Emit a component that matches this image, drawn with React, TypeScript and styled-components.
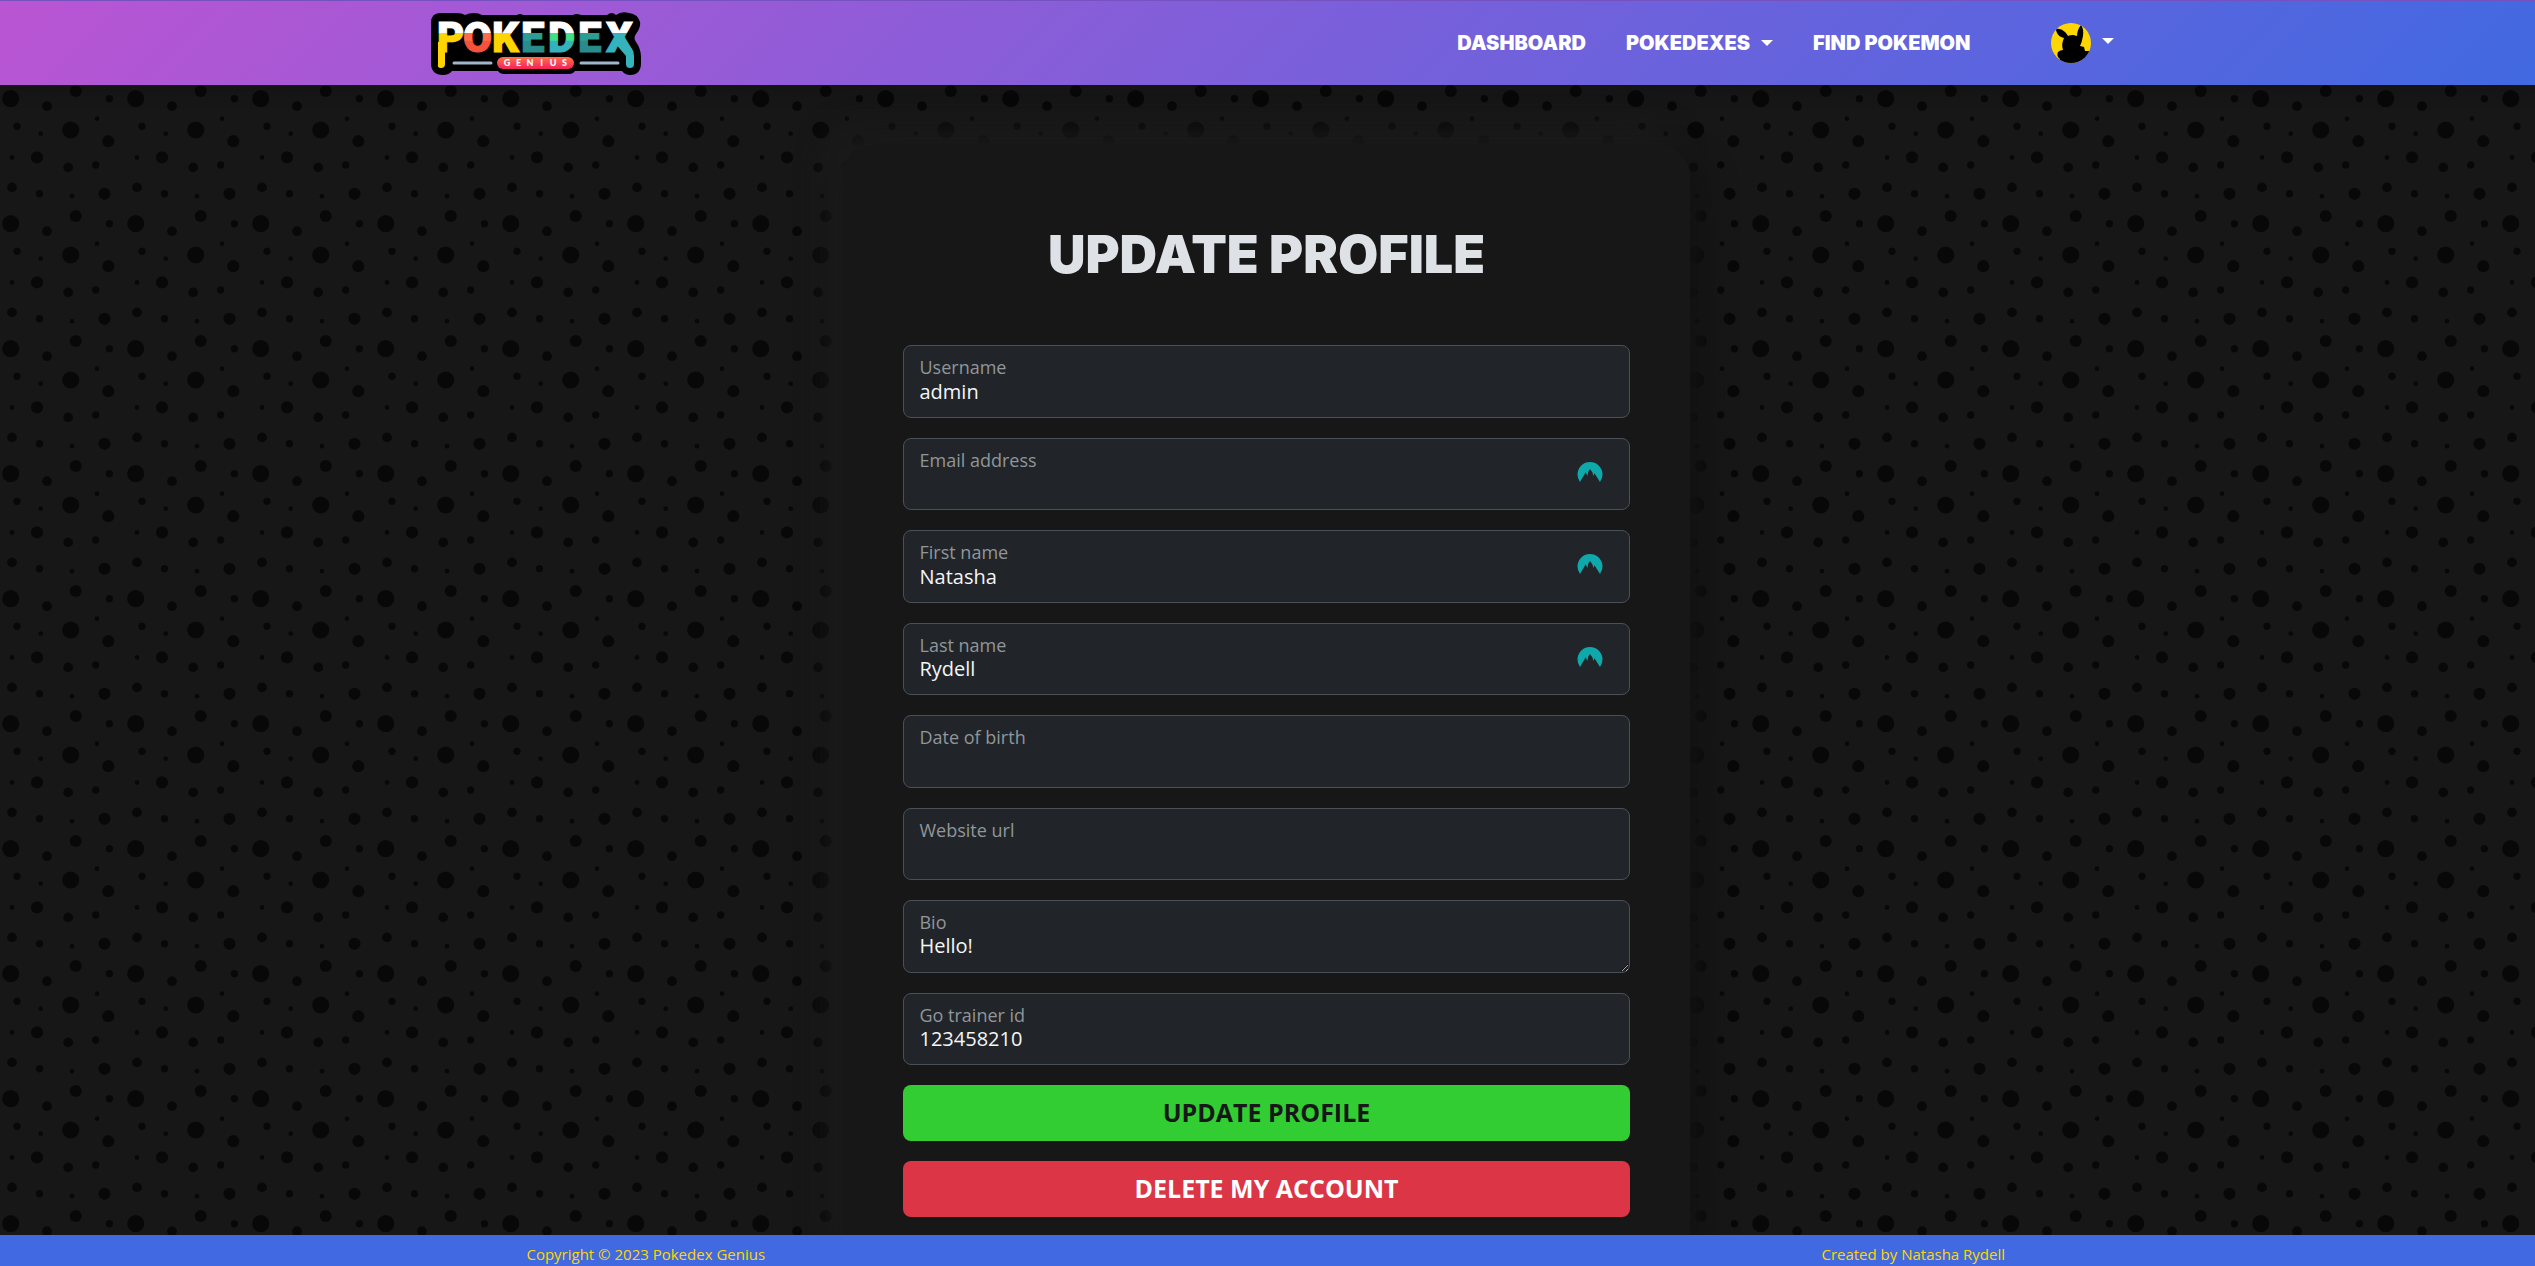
import React from "react";
import styled, { createGlobalStyle, css } from "styled-components";

/* [cx, cy, r] of every dot in one 125px tile */
const dots = [
  [10.7, 98.7, 8.6], [70.7, 5, 8.6],
  [75.7, 91, 6.1], [108.3, 16.2, 6.1], [37, 32.4, 6.1], [104.5, 68.8, 6.1],
  [47, 106.2, 4.9], [68.2, 42.4, 4.9], [12, 62.4, 4.9],
  [109.4, 98.7, 3.7], [17, 1.3, 3.7], [95.7, 40, 3.7], [39.5, 68.8, 3.7],
  [97, 118.7, 2.4], [40.7, 8.7, 2.4], [12, 32.5, 2.4], [72, 71.2, 2.4],
];

const tile =
  "<svg xmlns='http://www.w3.org/2000/svg' width='125' height='125'><g fill='#080808'>" +
  dots
    .flatMap(([x, y, r]) => [y, y + 125, y - 125].map((cy) => `<circle cx='${x}' cy='${cy}' r='${r}'/>`))
    .join("") +
  "</g></svg>";

const GlobalStyle = createGlobalStyle`
  *, *::before, *::after { box-sizing: border-box; }
  body {
    margin: 0;
    background: #171717 url("data:image/svg+xml,${encodeURIComponent(tile).replace(/'/g, "%27")}");
    color: #dee2e6;
    font-family: "Open Sans", "Noto Sans", sans-serif;
    font-size: 20px;
  }
`;

const Page = styled.div`
  display: flex;
  flex-direction: column;
  height: 100vh;
`;

const Header = styled.header`
  position: relative;
  z-index: 1;
  flex: none;
  padding: 0 24px;
  border-top: 1px solid #7552c0;
  background: linear-gradient(135deg, #ba55d3, #4169e1);
  box-shadow: 0 8px 16px rgba(0, 0, 0, 0.15);
`;

const Bar = styled.div`
  display: flex;
  align-items: center;
  justify-content: space-between;
  max-width: 1692px;
  height: 84px;
  margin: 0 auto;
`;

const Brand = styled.a`
  display: block;
  margin-left: 8px;
  svg {
    display: block;
    overflow: visible;
  }
`;

const Nav = styled.nav`
  display: flex;
  align-items: center;
  gap: 40px;
`;

const navText = css`
  display: flex;
  align-items: center;
  gap: 11px;
  padding: 0;
  border: 0;
  background: none;
  color: #fff;
  font-family: Inter, "Open Sans", sans-serif;
  font-size: 20px;
  line-height: 30px;
  font-weight: 900;
  text-transform: uppercase;
  text-decoration: none;
  cursor: pointer;
`;

const NavLink = styled.a`${navText}`;
const NavButton = styled.button`${navText}`;

const Caret = styled.span`
  border-top: 6px solid #fff;
  border-left: 6px solid transparent;
  border-right: 6px solid transparent;
`;

const AvatarButton = styled(NavButton)`
  margin-left: 40px;
  svg { display: block; }
  ${Caret} { margin-bottom: 4px; }
`;

const Main = styled.main`
  flex: 1;
  min-height: 0;
  padding: 60px 2px 60px 0;
  overflow-y: auto;
  scrollbar-width: none;
`;

const Card = styled.section`
  width: 33.4%;
  min-width: 480px;
  margin: 0 auto;
  padding: 78px 60px 60px;
  border-radius: 30px;
  background: #171717;
  box-shadow: 15px 15px 30px #121212, -15px -15px 30px #1c1c1c;
`;

const Title = styled.h1`
  margin: 0 0 58px;
  font-family: Inter, "Open Sans", sans-serif;
  font-size: 52px;
  line-height: 64px;
  font-weight: 900;
  text-align: center;
  text-transform: uppercase;
`;

const Form = styled.form`
  display: grid;
  gap: 20px;
`;

const Fields = styled.div`
  display: grid;
  grid-auto-rows: 1fr;
  gap: 20px;
  min-height: 720px;
`;

const Field = styled.div`
  position: relative;
  display: grid;
`;

const Label = styled.label`
  position: absolute;
  top: 10px;
  left: 16px;
  color: #90969a;
  font-size: 18px;
  line-height: 24px;
  pointer-events: none;
`;

const control = css`
  display: block;
  width: 100%;
  min-width: 0;
  height: 100%;
  margin: 0;
  padding: 31px 15px 11px;
  border: 1px solid #495057;
  border-radius: 8px;
  outline: 0;
  background: #212529;
  color: #f4f6f8;
  color-scheme: dark;
  font-family: inherit;
  font-size: 20px;
  line-height: 28px;
`;

const Input = styled.input`${control}`;
const TextArea = styled.textarea`
  ${control}
  resize: vertical;
  overflow: hidden;
`;

const FieldIcon = styled.svg`
  position: absolute;
  top: 24px;
  right: 27px;
`;

const Action = styled.button<{ $danger?: boolean }>`
  height: 56px;
  padding: 0 16px 2px;
  border: 0;
  border-radius: 8px;
  background: ${(p) => (p.$danger ? "#dc3545" : "#32cd32")};
  color: ${(p) => (p.$danger ? "#ffffff" : "#171717")};
  font-family: inherit;
  font-size: 25px;
  line-height: 36px;
  font-weight: 700;
  text-transform: uppercase;
  cursor: pointer;
`;

const Footer = styled.footer`
  display: grid;
  grid-template-columns: 1fr 1fr;
  flex: none;
  height: 31px;
  padding-top: 7px;
  background: #4169e1;
  color: #ffd700;
  font-size: 15px;
  line-height: 24px;
  text-align: center;
`;

const FooterCell = styled.div`
  padding-left: 24px;
`;

const letters = [
  { ch: "P", x: 7, fill: "url(#lemon)" },
  { ch: "O", x: 33, fill: "url(#coral)" },
  { ch: "K", x: 62, fill: "url(#lemon)" },
  { ch: "E", x: 91, fill: "url(#teal)" },
  { ch: "D", x: 118, fill: "url(#mint)" },
  { ch: "E", x: 148, fill: "url(#teal)" },
  { ch: "X", x: 176, fill: "url(#aqua)" },
];

const stops: Record<string, [string, string]> = {
  lemon: ["#ffd400", "#ffd400"],
  coral: ["#ff6a4a", "#f5523c"],
  teal: ["#2b9d94", "#2a8c8a"],
  mint: ["#3fe08c", "#35b3bd"],
  aqua: ["#35b3bd", "#35b3bd"],
};

const Logo = () => (
  <svg width="212" height="62" viewBox="0 0 212 62" role="img" aria-label="Pokedex Genius">
    <defs>
      {Object.entries(stops).map(([id, [a, b]]) => (
        <linearGradient key={id} id={id} gradientUnits="userSpaceOnUse" x1="0" y1="9" x2="0" y2="41">
          <stop offset="0" stopColor="#fff" />
          <stop offset="0.36" stopColor="#fff" />
          <stop offset="0.38" stopColor={a} />
          <stop offset="0.6" stopColor={a} />
          <stop offset="0.64" stopColor={b} />
          <stop offset="1" stopColor={b} />
        </linearGradient>
      ))}
      <linearGradient id="pill" x1="0" y1="0" x2="0" y2="1">
        <stop offset="0" stopColor="#ff7048" />
        <stop offset="1" stopColor="#f81f5c" />
      </linearGradient>
    </defs>
    <path
      d="M10 1h16q6 0 9 2 4-2 9-2t8 2h35q3-2 6 0h50q3-2 8 0h26q5-4 9 0 5-4 13-2 9 1 11 9 1 5-4 12-3 4 0 8 5 7 5 15v6q0 12-11 12-5 0-8-4h-47q-2 3-6 3H74q-4 0-6-3H22q-3 4-9 4-12 0-12-12V11Q1 1 10 1Z"
      fill="#000"
    />
    <path d="M8 30h7v22q0 4-4 4t-3-4Z" fill="#ffd400" />
    <path d="M184 30l9-6 9 13q2 3 2 7v8q0 4-4 4t-4-4v-8Z" fill="#35b3bd" />
    <g fontFamily="Roboto, sans-serif" fontWeight="900" fontSize="42" strokeWidth="1">
      {letters.map((l, i) => (
        <text key={i} x={l.x} y="40" fill={l.fill} stroke={l.fill}>{l.ch}</text>
      ))}
    </g>
    <path d="M24 51h37M151 51h37" stroke="#9fb6cc" strokeWidth="3" strokeLinecap="round" />
    <rect x="67" y="45" width="77" height="12" rx="6" fill="url(#pill)" />
    <g fontFamily="Lato, sans-serif" fontWeight="900" fontSize="9" fill="#fff" textAnchor="middle">
      {["G", "E", "N", "I", "U", "S"].map((c, i) => (
        <text key={c} x={77 + i * 11.5} y="54">{c}</text>
      ))}
    </g>
  </svg>
);

const Avatar = () => (
  <svg width="40" height="40" viewBox="0 0 40 40" role="img" aria-label="Account">
    <defs>
      <clipPath id="round"><circle cx="20" cy="20" r="20" /></clipPath>
    </defs>
    <g clipPath="url(#round)">
      <rect width="40" height="40" fill="#ffd600" />
      <path
        d="M5 6Q10 5 14 9 16 11 17 13 21 11 26 13 26 7 30 2 33 6 32 13 31 19 29 23L33 24 34 28 40 28V40H8L9 36Q5 33 7 29 9 27 12 27 10 21 13 15 8 14 6 10 5 8 5 6Z"
        fill="#000"
      />
    </g>
  </svg>
);

const VaultIcon = () => (
  <FieldIcon width="26" height="20" viewBox="0 0 26 20" aria-hidden="true">
    <path
      d="M3 20A12.5 12.5 0 1 1 23 20L17.5 11.3 16.3 14 15.5 10.5 13 7 11.3 9.5 10.3 14 8.7 10.3Z"
      fill="#0fa9ab"
    />
  </FieldIcon>
);

type FieldData = { id: string; label: string; value: string; icon?: boolean; multiline?: boolean };

const fields: FieldData[] = [
  { id: "username", label: "Username", value: "admin" },
  { id: "email", label: "Email address", value: "", icon: true },
  { id: "first-name", label: "First name", value: "Natasha", icon: true },
  { id: "last-name", label: "Last name", value: "Rydell", icon: true },
  { id: "birth", label: "Date of birth", value: "" },
  { id: "website", label: "Website url", value: "" },
  { id: "bio", label: "Bio", value: "Hello!", multiline: true },
  { id: "trainer", label: "Go trainer id", value: "123458210" },
];

export default function App() {
  return (
    <Page>
      <GlobalStyle />
      <Header>
        <Bar>
          <Brand href="#"><Logo /></Brand>
          <Nav>
            <NavLink href="#dashboard">Dashboard</NavLink>
            <NavButton type="button">Pokedexes<Caret /></NavButton>
            <NavLink href="#find">Find Pokemon</NavLink>
            <AvatarButton type="button"><Avatar /><Caret /></AvatarButton>
          </Nav>
        </Bar>
      </Header>
      <Main>
        <Card>
          <Title>Update Profile</Title>
          <Form onSubmit={(e) => e.preventDefault()}>
            <Fields>
              {fields.map((f) => (
                <Field key={f.id}>
                  {f.multiline ? (
                    <TextArea id={f.id} rows={1} defaultValue={f.value} />
                  ) : (
                    <Input id={f.id} type="text" defaultValue={f.value} />
                  )}
                  <Label htmlFor={f.id}>{f.label}</Label>
                  {f.icon && <VaultIcon />}
                </Field>
              ))}
            </Fields>
            <Action type="submit">Update Profile</Action>
            <Action type="button" $danger>Delete my account</Action>
          </Form>
        </Card>
      </Main>
      <Footer>
        <FooterCell>Copyright © 2023 Pokedex Genius</FooterCell>
        <FooterCell>Created by Natasha Rydell</FooterCell>
      </Footer>
    </Page>
  );
}
